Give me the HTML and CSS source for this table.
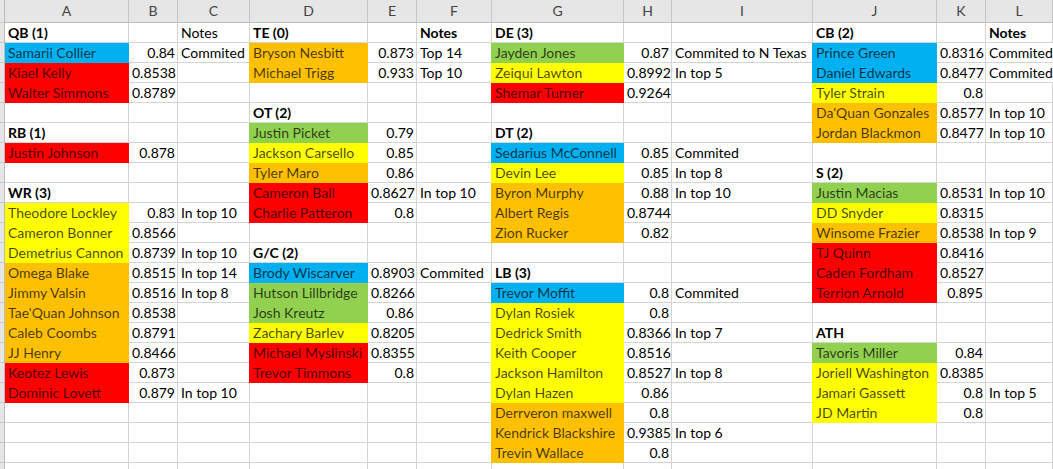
FILE: index.html
```html
<!DOCTYPE html>
<html>
<head>
<meta charset="utf-8">
<title>Recruits</title>
<link rel="stylesheet" href="styles.css">
</head>
<body>
<div class="sheet">
  <div class="row hdr"><div class="rh"></div><div class="h">A</div><div class="h">B</div><div class="h">C</div><div class="h">D</div><div class="h">E</div><div class="h">F</div><div class="h">G</div><div class="h">H</div><div class="h">I</div><div class="h">J</div><div class="h">K</div><div class="h">L</div></div>

  <div class="row"><div class="rh"></div><div class="c b">QB (1)</div><div class="c"></div><div class="c">Notes</div><div class="c b">TE (0)</div><div class="c"></div><div class="c b">Notes</div><div class="c b">DE (3)</div><div class="c"></div><div class="c"></div><div class="c b">CB (2)</div><div class="c"></div><div class="c b">Notes</div></div>

  <div class="row"><div class="rh"></div><div class="c blu">Samarii Collier</div><div class="c n">0.84</div><div class="c">Commited</div><div class="c org">Bryson Nesbitt</div><div class="c n">0.873</div><div class="c">Top 14</div><div class="c grn">Jayden Jones</div><div class="c n">0.87</div><div class="c">Commited to N Texas</div><div class="c blu">Prince Green</div><div class="c n">0.8316</div><div class="c">Commited</div></div>

  <div class="row"><div class="rh"></div><div class="c red">Kiael Kelly</div><div class="c n">0.8538</div><div class="c"></div><div class="c org">Michael Trigg</div><div class="c n">0.933</div><div class="c">Top 10</div><div class="c yel">Zeiqui Lawton</div><div class="c n">0.8992</div><div class="c">In top 5</div><div class="c blu">Daniel Edwards</div><div class="c n">0.8477</div><div class="c">Commited</div></div>

  <div class="row"><div class="rh"></div><div class="c red">Walter Simmons</div><div class="c n">0.8789</div><div class="c"></div><div class="c"></div><div class="c"></div><div class="c"></div><div class="c red">Shemar Turner</div><div class="c n">0.9264</div><div class="c"></div><div class="c yel">Tyler Strain</div><div class="c n">0.8</div><div class="c"></div></div>

  <div class="row"><div class="rh"></div><div class="c"></div><div class="c"></div><div class="c"></div><div class="c b">OT (2)</div><div class="c"></div><div class="c"></div><div class="c"></div><div class="c"></div><div class="c"></div><div class="c org">Da'Quan Gonzales</div><div class="c n">0.8577</div><div class="c">In top 10</div></div>

  <div class="row"><div class="rh"></div><div class="c b">RB (1)</div><div class="c"></div><div class="c"></div><div class="c grn">Justin Picket</div><div class="c n">0.79</div><div class="c"></div><div class="c b">DT (2)</div><div class="c"></div><div class="c"></div><div class="c org">Jordan Blackmon</div><div class="c n">0.8477</div><div class="c">In top 10</div></div>

  <div class="row"><div class="rh"></div><div class="c red">Justin Johnson</div><div class="c n">0.878</div><div class="c"></div><div class="c yel">Jackson Carsello</div><div class="c n">0.85</div><div class="c"></div><div class="c blu">Sedarius McConnell</div><div class="c n">0.85</div><div class="c">Commited</div><div class="c"></div><div class="c"></div><div class="c"></div></div>

  <div class="row"><div class="rh"></div><div class="c"></div><div class="c"></div><div class="c"></div><div class="c org">Tyler Maro</div><div class="c n">0.86</div><div class="c"></div><div class="c yel">Devin Lee</div><div class="c n">0.85</div><div class="c">In top 8</div><div class="c b">S (2)</div><div class="c"></div><div class="c"></div></div>

  <div class="row"><div class="rh"></div><div class="c b">WR (3)</div><div class="c"></div><div class="c"></div><div class="c red">Cameron Ball</div><div class="c n">0.8627</div><div class="c">In top 10</div><div class="c org">Byron Murphy</div><div class="c n">0.88</div><div class="c">In top 10</div><div class="c grn">Justin Macias</div><div class="c n">0.8531</div><div class="c">In top 10</div></div>

  <div class="row"><div class="rh"></div><div class="c yel">Theodore Lockley</div><div class="c n">0.83</div><div class="c">In top 10</div><div class="c red">Charlie Patteron</div><div class="c n">0.8</div><div class="c"></div><div class="c org">Albert Regis</div><div class="c n">0.8744</div><div class="c"></div><div class="c yel">DD Snyder</div><div class="c n">0.8315</div><div class="c"></div></div>

  <div class="row"><div class="rh"></div><div class="c yel">Cameron Bonner</div><div class="c n">0.8566</div><div class="c"></div><div class="c"></div><div class="c"></div><div class="c"></div><div class="c org">Zion Rucker</div><div class="c n">0.82</div><div class="c"></div><div class="c org">Winsome Frazier</div><div class="c n">0.8538</div><div class="c">In top 9</div></div>

  <div class="row"><div class="rh"></div><div class="c yel">Demetrius Cannon</div><div class="c n">0.8739</div><div class="c">In top 10</div><div class="c b">G/C (2)</div><div class="c"></div><div class="c"></div><div class="c"></div><div class="c"></div><div class="c"></div><div class="c red">TJ Quinn</div><div class="c n">0.8416</div><div class="c"></div></div>

  <div class="row"><div class="rh"></div><div class="c org">Omega Blake</div><div class="c n">0.8515</div><div class="c">In top 14</div><div class="c blu">Brody Wiscarver</div><div class="c n">0.8903</div><div class="c">Commited</div><div class="c b">LB (3)</div><div class="c"></div><div class="c"></div><div class="c red">Caden Fordham</div><div class="c n">0.8527</div><div class="c"></div></div>

  <div class="row"><div class="rh"></div><div class="c org">Jimmy Valsin</div><div class="c n">0.8516</div><div class="c">In top 8</div><div class="c grn">Hutson Lillbridge</div><div class="c n">0.8266</div><div class="c"></div><div class="c blu">Trevor Moffit</div><div class="c n">0.8</div><div class="c">Commited</div><div class="c red">Terrion Arnold</div><div class="c n">0.895</div><div class="c"></div></div>

  <div class="row"><div class="rh"></div><div class="c org">Tae'Quan Johnson</div><div class="c n">0.8538</div><div class="c"></div><div class="c grn">Josh Kreutz</div><div class="c n">0.86</div><div class="c"></div><div class="c yel">Dylan Rosiek</div><div class="c n">0.8</div><div class="c"></div><div class="c"></div><div class="c"></div><div class="c"></div></div>

  <div class="row"><div class="rh"></div><div class="c org">Caleb Coombs</div><div class="c n">0.8791</div><div class="c"></div><div class="c yel">Zachary Barlev</div><div class="c n">0.8205</div><div class="c"></div><div class="c yel">Dedrick Smith</div><div class="c n">0.8366</div><div class="c">In top 7</div><div class="c b">ATH</div><div class="c"></div><div class="c"></div></div>

  <div class="row"><div class="rh"></div><div class="c org">JJ Henry</div><div class="c n">0.8466</div><div class="c"></div><div class="c red">Michael Myslinski</div><div class="c n">0.8355</div><div class="c"></div><div class="c yel">Keith Cooper</div><div class="c n">0.8516</div><div class="c"></div><div class="c grn">Tavoris Miller</div><div class="c n">0.84</div><div class="c"></div></div>

  <div class="row"><div class="rh"></div><div class="c red">Keotez Lewis</div><div class="c n">0.873</div><div class="c"></div><div class="c red">Trevor Timmons</div><div class="c n">0.8</div><div class="c"></div><div class="c yel">Jackson Hamilton</div><div class="c n">0.8527</div><div class="c">In top 8</div><div class="c yel">Joriell Washington</div><div class="c n">0.8385</div><div class="c"></div></div>

  <div class="row"><div class="rh"></div><div class="c red">Dominic Lovett</div><div class="c n">0.879</div><div class="c">In top 10</div><div class="c"></div><div class="c"></div><div class="c"></div><div class="c yel">Dylan Hazen</div><div class="c n">0.86</div><div class="c"></div><div class="c yel">Jamari Gassett</div><div class="c n">0.8</div><div class="c">In top 5</div></div>

  <div class="row"><div class="rh"></div><div class="c"></div><div class="c"></div><div class="c"></div><div class="c"></div><div class="c"></div><div class="c"></div><div class="c org">Derrveron maxwell</div><div class="c n">0.8</div><div class="c"></div><div class="c yel">JD Martin</div><div class="c n">0.8</div><div class="c"></div></div>

  <div class="row"><div class="rh"></div><div class="c"></div><div class="c"></div><div class="c"></div><div class="c"></div><div class="c"></div><div class="c"></div><div class="c org">Kendrick Blackshire</div><div class="c n">0.9385</div><div class="c">In top 6</div><div class="c"></div><div class="c"></div><div class="c"></div></div>

  <div class="row"><div class="rh"></div><div class="c"></div><div class="c"></div><div class="c"></div><div class="c"></div><div class="c"></div><div class="c"></div><div class="c org">Trevin Wallace</div><div class="c n">0.8</div><div class="c"></div><div class="c"></div><div class="c"></div><div class="c"></div></div>

  <div class="row"><div class="rh"></div><div class="c"></div><div class="c"></div><div class="c"></div><div class="c"></div><div class="c"></div><div class="c"></div><div class="c"></div><div class="c"></div><div class="c"></div><div class="c"></div><div class="c"></div><div class="c"></div></div>
</div>
</body>
</html>
```

FILE: styles.css
```css
html, body {
  margin: 0;
  padding: 0;
  background: #ffffff;
}
body {
  width: 1053px;
  height: 469px;
  overflow: hidden;
  font-family: Lato, "Liberation Sans", sans-serif;
  font-size: 14px;
  color: #000;
}
.sheet {
  display: flex;
  flex-direction: column;
}
.row {
  display: grid;
  grid-template-columns: 5px 124px 49px 72px 118px 49px 75px 132px 48px 141px 124px 49px 1fr;
  height: 20px;
}
.row > div {
  box-sizing: border-box;
  border-right: 1px solid #d4d4d4;
  border-bottom: 1px solid #d4d4d4;
  white-space: nowrap;
  line-height: 19px;
}
.rh {
  background: #e6e6e6;
  border-right-color: #bcbcbc !important;
  border-bottom-color: #c8c8c8 !important;
}
.hdr {
  height: 23px;
}
.hdr > div {
  background: #e6e6e6;
  border-right-color: #c6c6c6;
  border-bottom-color: #bdbdbd;
  line-height: 22px;
}
.h {
  text-align: center;
  color: #444;
}
.c {
  padding: 0 2px 0 3px;
}
.n {
  text-align: right;
}
.b {
  font-weight: bold;
}
.blu, .red, .yel, .org, .grn {
  color: rgba(0, 0, 0, 0.72);
}
.blu { background: #00b0f0; border-color: #00b0f0 !important; box-shadow: -1px 0 0 #00b0f0; }
.red { background: #ff0000; border-color: #ff0000 !important; box-shadow: -1px 0 0 #ff0000; }
.yel { background: #ffff00; border-color: #ffff00 !important; box-shadow: -1px 0 0 #ffff00; }
.org { background: #ffc000; border-color: #ffc000 !important; box-shadow: -1px 0 0 #ffc000; }
.grn { background: #92d050; border-color: #92d050 !important; box-shadow: -1px 0 0 #92d050; }
.row > .c:nth-child(2) {
  box-shadow: none;
}
```
